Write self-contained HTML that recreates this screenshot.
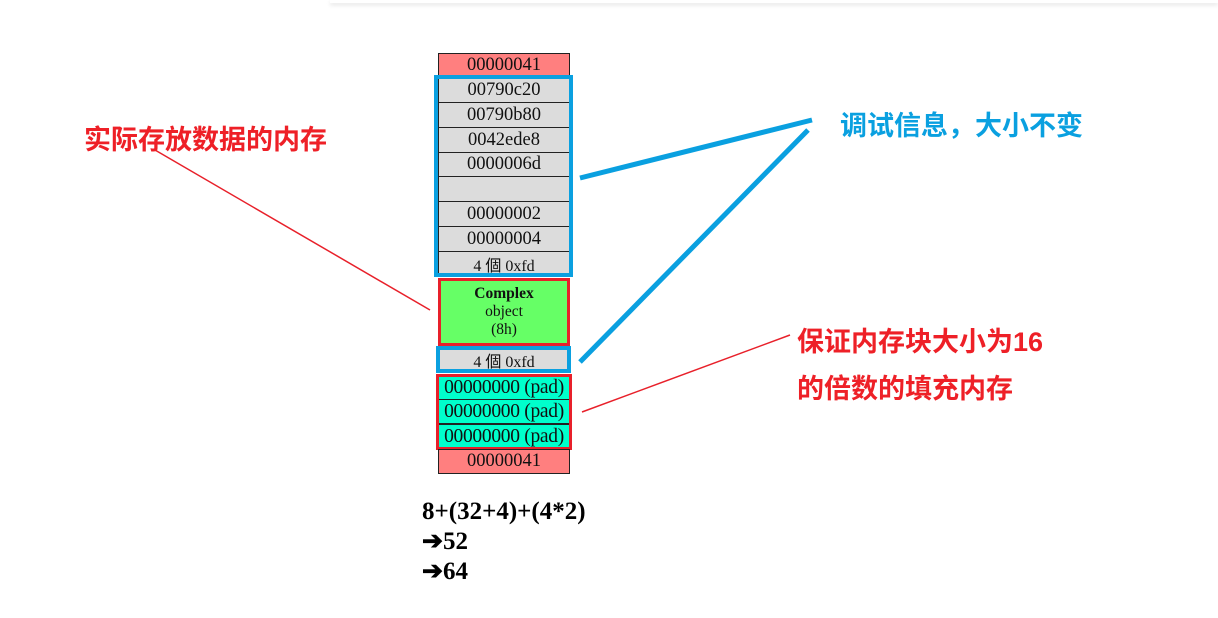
<!DOCTYPE html>
<html><head><meta charset="utf-8"><style>
body{margin:0;width:1218px;height:618px;background:#fff;position:relative;overflow:hidden;font-family:"Liberation Serif",serif}
.c{position:absolute;left:438px;width:132px;box-sizing:border-box;border:1px solid #222;text-align:center;font-size:18.5px;color:#111;background:#dcdcdc;display:flex;align-items:center;justify-content:center;white-space:nowrap}
.p{font-size:19.5px;letter-spacing:-0.3px}
.b{position:absolute;box-sizing:border-box;border:4px solid #0aa0e0}
.r{position:absolute;box-sizing:border-box;border:3px solid #e8202a}
.t{position:absolute;font-family:"Liberation Sans","Noto Sans CJK SC",sans-serif;font-weight:bold;font-size:27px;line-height:30px;white-space:nowrap}
</style></head><body>
<div style="position:absolute;left:330px;top:0;width:888px;height:3px;box-shadow:0 2px 4px rgba(0,0,0,.12)"></div>
<div class="c" style="top:53px;height:25px;background:#ff7f7f">00000041</div>
<div class="c" style="top:78px;height:25px">00790c20</div>
<div class="c" style="top:102px;height:26px">00790b80</div>
<div class="c" style="top:127px;height:26px">0042ede8</div>
<div class="c" style="top:152px;height:25px">0000006d</div>
<div class="c" style="top:176px;height:26px"></div>
<div class="c" style="top:201px;height:26px">00000002</div>
<div class="c" style="top:226px;height:26px">00000004</div>
<div class="c" style="top:251px;height:25px;font-size:16px">4 個 0xfd</div>
<div class="b" style="left:434px;top:75px;width:139px;height:202px"></div>
<div class="c" style="top:278px;height:68px;background:#66ff66;flex-direction:column;font-size:15.5px;line-height:18px;border:3px solid #e8202a"><b>Complex</b>object<br>(8h)</div>
<div class="c" style="top:349px;height:22px;font-size:16px">4 個 0xfd</div>
<div class="b" style="left:436px;top:346px;width:135px;height:27px"></div>
<div class="c p" style="top:375px;height:25px;background:#00ffcc">00000000 (pad)</div>
<div class="c p" style="top:399px;height:25px;background:#00ffcc">00000000 (pad)</div>
<div class="c p" style="top:424px;height:25px;background:#00ffcc">00000000 (pad)</div>
<div class="r" style="left:436px;top:374px;width:136px;height:76px"></div>
<div class="c" style="top:449px;height:25px;background:#ff7f7f">00000041</div>
<div style="position:absolute;left:422px;top:497px;font-weight:bold;font-size:25px;line-height:30px;color:#000">8+(32+4)+(4*2)<br>➔52<br>➔64</div>
<svg style="position:absolute;left:0;top:0" width="1218" height="618">
<line x1="155" y1="150" x2="430" y2="310" stroke="#e8202a" stroke-width="1.5"/>
<line x1="580" y1="178" x2="812" y2="120" stroke="#0aa0e0" stroke-width="5"/>
<line x1="580" y1="362" x2="808" y2="130" stroke="#0aa0e0" stroke-width="5"/>
<line x1="582" y1="412" x2="790" y2="335" stroke="#e8202a" stroke-width="1.5"/>
</svg>
<div class="t" style="left:84px;top:125px;color:#ee2027">实际存放数据的内存</div>
<div class="t" style="left:840px;top:111px;color:#0aa0e0">调试信息，大小不变</div>
<div class="t" style="left:797px;top:327px;color:#ee2027">保证内存块大小为16</div>
<div class="t" style="left:797px;top:374px;color:#ee2027">的倍数的填充内存</div>
</body></html>
